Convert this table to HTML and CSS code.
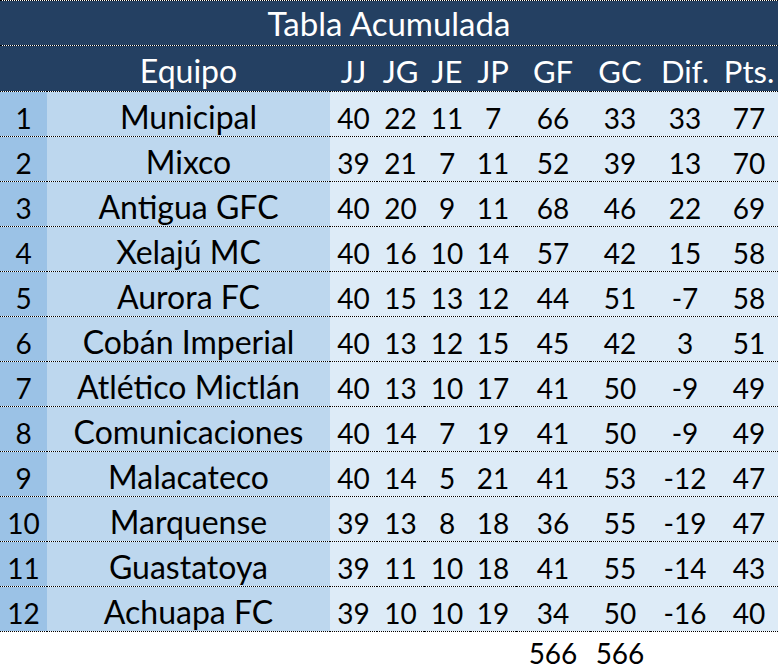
FILE: index.html
```html
<!DOCTYPE html>
<html lang="es">
<head>
<meta charset="utf-8">
<title>Tabla Acumulada</title>
<link rel="stylesheet" href="styles.css">
</head>
<body>
<table class="sheet">
  <colgroup>
    <col class="w-rank"><col class="w-team"><col class="w-jj"><col class="w-jg"><col class="w-je"><col class="w-jp"><col class="w-gf"><col class="w-gc"><col class="w-dif"><col class="w-pts">
  </colgroup>
  <thead>
    <tr class="title-row"><th colspan="10">Tabla Acumulada</th></tr>
    <tr class="head-row">
      <th></th><th class="team">Equipo</th><th>JJ</th><th>JG</th><th>JE</th><th>JP</th><th>GF</th><th>GC</th><th>Dif.</th><th>Pts.</th>
    </tr>
  </thead>
  <tbody>
    <tr><td class="rank">1</td><td class="team">Municipal</td><td>40</td><td>22</td><td>11</td><td>7</td><td>66</td><td>33</td><td>33</td><td>77</td></tr>
    <tr><td class="rank">2</td><td class="team">Mixco</td><td>39</td><td>21</td><td>7</td><td>11</td><td>52</td><td>39</td><td>13</td><td>70</td></tr>
    <tr><td class="rank">3</td><td class="team">Antigua GFC</td><td>40</td><td>20</td><td>9</td><td>11</td><td>68</td><td>46</td><td>22</td><td>69</td></tr>
    <tr><td class="rank">4</td><td class="team">Xelajú MC</td><td>40</td><td>16</td><td>10</td><td>14</td><td>57</td><td>42</td><td>15</td><td>58</td></tr>
    <tr><td class="rank">5</td><td class="team">Aurora FC</td><td>40</td><td>15</td><td>13</td><td>12</td><td>44</td><td>51</td><td>-7</td><td>58</td></tr>
    <tr><td class="rank">6</td><td class="team">Cobán Imperial</td><td>40</td><td>13</td><td>12</td><td>15</td><td>45</td><td>42</td><td>3</td><td>51</td></tr>
    <tr><td class="rank">7</td><td class="team">Atlético Mictlán</td><td>40</td><td>13</td><td>10</td><td>17</td><td>41</td><td>50</td><td>-9</td><td>49</td></tr>
    <tr><td class="rank">8</td><td class="team">Comunicaciones</td><td>40</td><td>14</td><td>7</td><td>19</td><td>41</td><td>50</td><td>-9</td><td>49</td></tr>
    <tr><td class="rank">9</td><td class="team">Malacateco</td><td>40</td><td>14</td><td>5</td><td>21</td><td>41</td><td>53</td><td>-12</td><td>47</td></tr>
    <tr><td class="rank">10</td><td class="team">Marquense</td><td>39</td><td>13</td><td>8</td><td>18</td><td>36</td><td>55</td><td>-19</td><td>47</td></tr>
    <tr><td class="rank">11</td><td class="team">Guastatoya</td><td>39</td><td>11</td><td>10</td><td>18</td><td>41</td><td>55</td><td>-14</td><td>43</td></tr>
    <tr><td class="rank">12</td><td class="team">Achuapa FC</td><td>39</td><td>10</td><td>10</td><td>19</td><td>34</td><td>50</td><td>-16</td><td>40</td></tr>
  </tbody>
  <tfoot>
    <tr class="totals"><td></td><td></td><td></td><td></td><td></td><td></td><td>566</td><td>566</td><td></td><td></td></tr>
  </tfoot>
</table>
</body>
</html>
```

FILE: styles.css
```css
html, body {
  margin: 0;
  padding: 0;
  background: #ffffff;
  overflow: hidden;
}

.sheet {
  width: 778px;
  table-layout: fixed;
  border-collapse: separate;
  border-spacing: 0;
  background: #ffffff;
  font-family: Lato, "Open Sans", sans-serif;
  color: #000000;
}

.w-rank { width: 47px; }
.w-team { width: 283px; }
.w-jj { width: 47px; }
.w-jg { width: 47px; }
.w-je { width: 46px; }
.w-jp { width: 46px; }
.w-gf { width: 74px; }
.w-gc { width: 60px; }
.w-dif { width: 70px; }
.w-pts { width: 58px; }

th, td {
  box-sizing: border-box;
  padding: 0;
  text-align: center;
  vertical-align: baseline;
  white-space: nowrap;
  line-height: 1;
  font-weight: normal;
  border-bottom: 1px dotted #000000;
  background-clip: padding-box;
}

.title-row th {
  height: 46px;
  border-top: 1px dotted #000000;
  background-color: #244062;
  color: #ffffff;
  font-size: 33px;
  padding-top: 6px;
}

.head-row th {
  height: 46px;
  background-color: #244062;
  color: #ffffff;
  font-size: 31px;
  padding-top: 9px;
}

.head-row th.team {
  font-size: 32px;
}

tbody td {
  height: 45px;
  background-color: #ddebf7;
  font-size: 28px;
  padding-top: 9px;
}

tbody td.rank {
  background-color: #9bc2e6;
}

tbody td.team {
  background-color: #bdd7ee;
  font-size: 32px;
}

.totals td {
  height: 36px;
  border-bottom: none;
  background: transparent;
  font-size: 28px;
  line-height: 0.85;
  padding-top: 10px;
}
```
